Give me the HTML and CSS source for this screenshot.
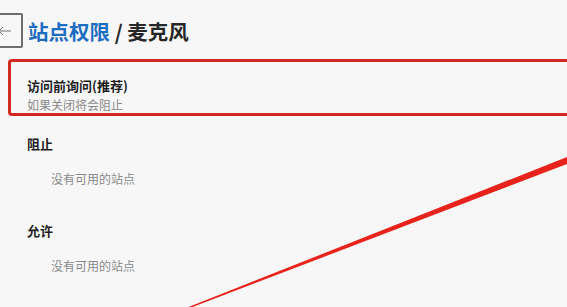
FILE: index.html
```html
<!DOCTYPE html>
<html lang="zh-CN">

<head>
    <meta charset="UTF-8">
    <title>站点权限 / 麦克风</title>
    <link rel="stylesheet" href="styles.css">
</head>

<body>
    <header class="top">
        <div class="back">
            <svg width="14" height="10" viewBox="0 0 14 10">
                <path d="M5 1 L1 5 L5 9 M1 5 H13" fill="none" stroke="#707070" stroke-width="1"/>
            </svg>
        </div>
        <h1 class="title"><span class="crumb">站点权限</span> / 麦克风</h1>
    </header>

    <main>
        <!-- highlighted row -->
        <div class="ask">
            <div class="ask-title">访问前询问(推荐)</div>
            <div class="ask-sub">如果关闭将会阻止</div>
        </div>

        <section class="group">
            <h2>阻止</h2>
            <p class="empty">没有可用的站点</p>
        </section>

        <section class="group">
            <h2>允许</h2>
            <p class="empty">没有可用的站点</p>
        </section>
    </main>

    <!-- annotation stroke drawn over the page -->
    <svg class="mark" width="567" height="307" viewBox="0 0 567 307">
        <polygon points="186,308 567,157 567,164 190,308" fill="#e8231b"/>
    </svg>
</body>

</html>
```

FILE: styles.css
```css
/* settings page, light grey theme */

html,
body {
    margin: 0;
    padding: 0;
    height: 100%;
    background-color: #f7f7f7;
    color: #1f1f1f;
    font-family: "Noto Sans CJK SC", "Liberation Sans", sans-serif;
    position: relative;
    overflow: hidden;
}

.top {
    display: flex;
    align-items: center;
    gap: 5px;
    padding-top: 13px;
}

.back {
    width: 36px;
    height: 35px;
    margin-left: -13px;
    border: 2px solid #6e6e6e;
    border-radius: 2px;
    display: flex;
    align-items: center;
    justify-content: flex-end;
    padding-right: 9px;
    box-sizing: border-box;
}

.title {
    margin: 0;
    font-size: 20.5px;
    line-height: 26px;
    font-weight: bold;
    color: #262626;
}

.crumb {
    color: #1c6dc1;
}

main {
    padding-top: 11px;
}

.ask {
    height: 57px;
    margin-left: 8px;
    margin-right: -20px;
    border: 3px solid #d3291f;
    border-radius: 4px;
    padding: 14px 0 0 16px;
    box-sizing: border-box;
    overflow: hidden;
}

.ask-title {
    font-size: 13px;
    line-height: 19px;
    font-weight: bold;
}

.ask-sub {
    font-size: 12px;
    line-height: 19px;
    color: #8a8a8a;
}

.group {
    padding-left: 27px;
}

.group h2 {
    margin: 0;
    padding-top: 18px;
    font-size: 13px;
    line-height: 20px;
    font-weight: bold;
}

.group .empty {
    margin: 0;
    padding: 15px 0 14px 24px;
    font-size: 12px;
    line-height: 20px;
    color: #8a8a8a;
}

.mark {
    position: absolute;
    top: 0;
    left: 0;
    pointer-events: none;
}
```
